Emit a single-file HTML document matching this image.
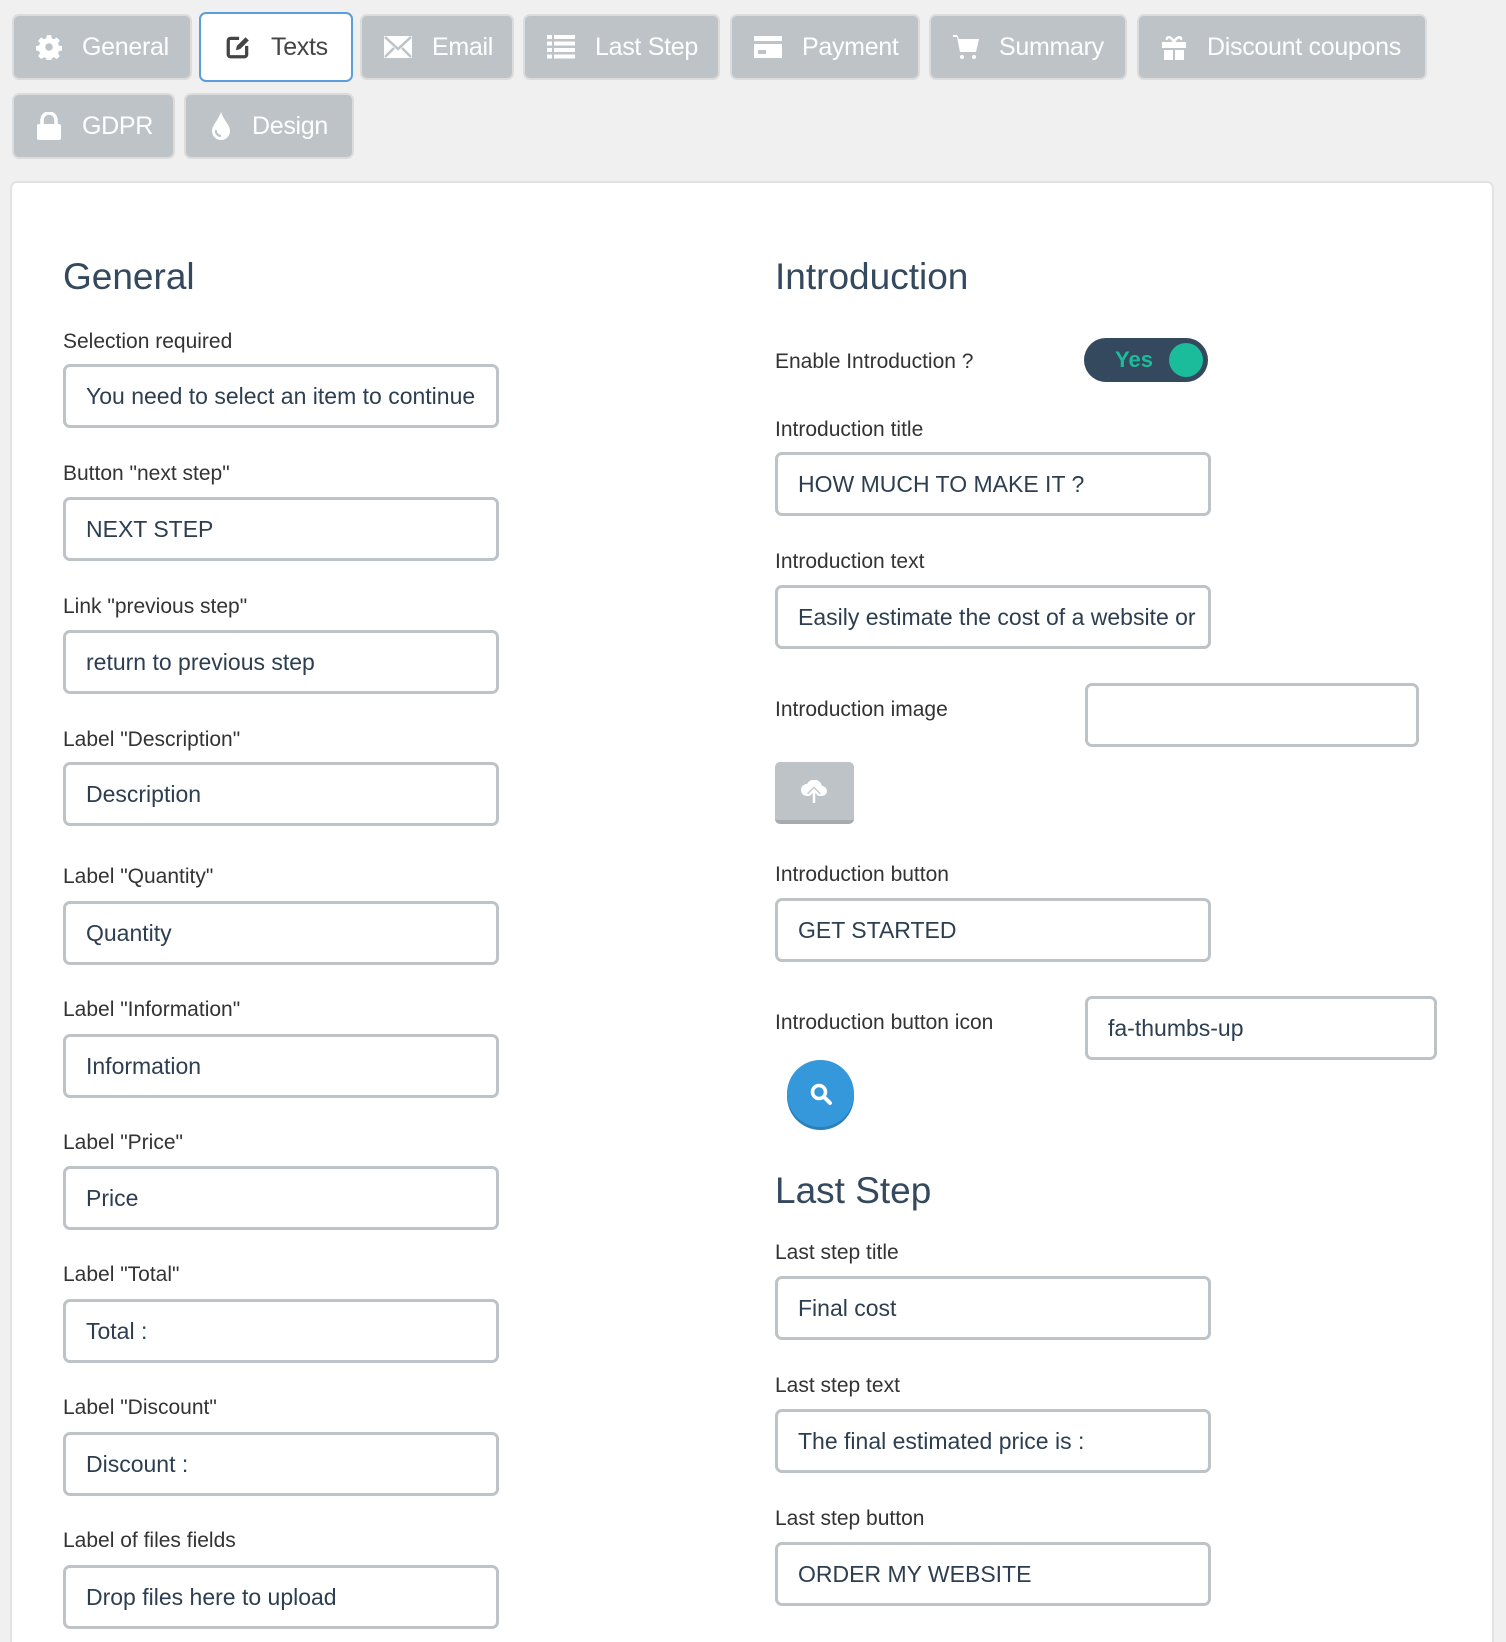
<!DOCTYPE html>
<html style="width:1506px;height:1642px;overflow:hidden"><head><meta charset="utf-8"><style>
*{box-sizing:border-box;margin:0;padding:0}
body{width:1506px;height:1642px;background:#f0f0f0;font-family:"Liberation Sans",Arial,sans-serif;position:relative;overflow:hidden}
.tab{position:absolute;background:#bdc3c7;border:2px solid #dcdcdc;border-radius:7px;color:#fff;font-size:25px;display:flex;align-items:center;letter-spacing:-0.3px}
.tab svg{margin-right:20px;flex:none}
.tab.act{background:#fff;border:2px solid #5a9ee0;color:#444}
.panel{position:absolute;left:10px;top:181px;width:1484px;height:1461px;background:#fff;border:2px solid #e2e2e2;border-bottom:none;border-radius:7px 7px 0 0}
.h{position:absolute;font-size:37px;color:#34495e}
.l{position:absolute;font-size:21px;color:#333;line-height:24px}
.i{position:absolute;height:64px;border:3px solid #bdc3c7;border-radius:7px;background:#fff;font-size:23px;color:#2c3e50;padding-left:20px;line-height:58px;white-space:nowrap;overflow:hidden}
.lc{left:63px;width:436px}
.rc{left:775px;width:436px}
</style></head><body>
<div class="tab" style="left:12px;top:14px;width:180px;height:66px;padding-left:22px"><svg width="26" height="26" viewBox="0 0 24 24"><path fill="#fff" d="M10 1h4l.6 3 2 .9 2.6-1.7 2.8 2.8-1.7 2.6.9 2 3 .6v4l-3 .6-.9 2 1.7 2.6-2.8 2.8-2.6-1.7-2 .9-.6 3h-4l-.6-3-2-.9-2.6 1.7-2.8-2.8 1.7-2.6-.9-2-3-.6v-4l3-.6.9-2-1.7-2.6 2.8-2.8 2.6 1.7 2-.9z"/><circle cx="12" cy="12" r="3.5" fill="#bdc3c7"/></svg>General</div>
<div class="tab act" style="left:199px;top:12px;width:154px;height:70px;padding-left:24px"><svg width="26" height="26" viewBox="0 0 24 24"><path d="M13 4H5a2 2 0 0 0-2 2v13a2 2 0 0 0 2 2h13a2 2 0 0 0 2-2v-8" fill="none" stroke="#444" stroke-width="3"/><path d="M10 15l1-4 8-8 3 3-8 8z" fill="#444"/></svg>Texts</div>
<div class="tab" style="left:360px;top:14px;width:154px;height:66px;padding-left:22px"><svg width="28" height="22" viewBox="0 0 28 22"><path fill="#fff" d="M0 0h28v22H0z"/><path d="M1 1l13 12L27 1M1 21l9-9M27 21l-9-9" stroke="#bdc3c7" stroke-width="2.5" fill="none"/></svg>Email</div>
<div class="tab" style="left:523px;top:14px;width:197px;height:66px;padding-left:22px"><svg width="28" height="24" viewBox="0 0 28 24"><g fill="#fff"><rect x="0" y="0" width="5" height="4"/><rect x="7" y="0" width="21" height="4"/><rect x="0" y="6.5" width="5" height="4"/><rect x="7" y="6.5" width="21" height="4"/><rect x="0" y="13" width="5" height="4"/><rect x="7" y="13" width="21" height="4"/><rect x="0" y="19.5" width="5" height="4"/><rect x="7" y="19.5" width="21" height="4"/></g></svg>Last Step</div>
<div class="tab" style="left:730px;top:14px;width:190px;height:66px;padding-left:22px"><svg width="28" height="22" viewBox="0 0 28 22"><path fill="#fff" d="M0 0h28v5H0zM0 8h28v14H0z"/><rect x="4" y="14" width="8" height="4" fill="#bdc3c7"/></svg>Payment</div>
<div class="tab" style="left:929px;top:14px;width:198px;height:66px;padding-left:22px"><svg width="26" height="26" viewBox="0 0 26 26"><path fill="#fff" d="M0 1h4l2 4h20l-3 13H7L4 3H0z"/><circle cx="9" cy="23" r="2" fill="#fff"/><circle cx="21" cy="23" r="2" fill="#fff"/></svg>Summary</div>
<div class="tab" style="left:1137px;top:14px;width:290px;height:66px;padding-left:22px"><svg width="26" height="26" viewBox="0 0 26 26"><path fill="#fff" d="M1 8h24v6H1zM3 16h9v10H3zM14 16h9v10h-9z"/><path d="M13 8C10 2 5 2 6 6M13 8c3-6 8-6 7-2" stroke="#fff" stroke-width="2.5" fill="none"/></svg>Discount coupons</div>
<div class="tab" style="left:12px;top:93px;width:163px;height:66px;padding-left:22px"><svg width="26" height="28" viewBox="0 0 26 28"><path d="M6 12V8a7 7 0 0 1 14 0v4" stroke="#fff" stroke-width="3.5" fill="none"/><rect x="1" y="12" width="24" height="16" rx="2" fill="#fff"/></svg>GDPR</div>
<div class="tab" style="left:184px;top:93px;width:170px;height:66px;padding-left:24px"><svg width="22" height="28" viewBox="0 0 22 28"><path fill="#fff" d="M11 0C8 9 2 13 2 19a9 9 0 0 0 18 0C20 13 14 9 11 0z"/><path d="M6 18a5 5 0 0 0 5 6" stroke="#bdc3c7" stroke-width="2" fill="none"/></svg>Design</div>

<div class="panel"></div>

<div class="h" style="left:63px;top:256px">General</div>
<div class="l" style="left:63px;top:330px">Selection required</div>
<div class="i lc" style="top:364px">You need to select an item to continue</div>
<div class="l" style="left:63px;top:462px">Button "next step"</div>
<div class="i lc" style="top:497px">NEXT STEP</div>
<div class="l" style="left:63px;top:595px">Link "previous step"</div>
<div class="i lc" style="top:630px">return to previous step</div>
<div class="l" style="left:63px;top:728px">Label "Description"</div>
<div class="i lc" style="top:762px">Description</div>
<div class="l" style="left:63px;top:865px">Label "Quantity"</div>
<div class="i lc" style="top:901px">Quantity</div>
<div class="l" style="left:63px;top:998px">Label "Information"</div>
<div class="i lc" style="top:1034px">Information</div>
<div class="l" style="left:63px;top:1131px">Label "Price"</div>
<div class="i lc" style="top:1166px">Price</div>
<div class="l" style="left:63px;top:1263px">Label "Total"</div>
<div class="i lc" style="top:1299px">Total :</div>
<div class="l" style="left:63px;top:1396px">Label "Discount"</div>
<div class="i lc" style="top:1432px">Discount :</div>
<div class="l" style="left:63px;top:1529px">Label of files fields</div>
<div class="i lc" style="top:1565px">Drop files here to upload</div>

<div class="h" style="left:775px;top:256px">Introduction</div>
<div class="l" style="left:775px;top:350px">Enable Introduction ?</div>
<div style="position:absolute;left:1084px;top:338px;width:124px;height:44px;border-radius:22px;background:#34495e"><span style="position:absolute;left:31px;top:9px;font-size:22px;font-weight:bold;color:#1abc9c">Yes</span><span style="position:absolute;right:5px;top:5px;width:34px;height:34px;border-radius:50%;background:#1abc9c"></span></div>
<div class="l" style="left:775px;top:418px">Introduction title</div>
<div class="i rc" style="top:452px">HOW MUCH TO MAKE IT ?</div>
<div class="l" style="left:775px;top:550px">Introduction text</div>
<div class="i rc" style="top:585px">Easily estimate the cost of a website or</div>
<div class="l" style="left:775px;top:698px">Introduction image</div>
<div class="i" style="left:1085px;top:683px;width:334px"></div>
<div style="position:absolute;left:775px;top:762px;width:79px;height:62px;background:#bdc3c7;border-radius:5px;border-bottom:4px solid #a5abaf"><svg style="position:absolute;left:25px;top:18px" width="28" height="24" viewBox="0 0 28 24"><path fill="#fff" d="M7 16a6 6 0 0 1 0-12 8 8 0 0 1 15 2 5 5 0 0 1 0 10z"/><path d="M14 23V11M9 15l5-5 5 5" stroke="#bdc3c7" stroke-width="5" fill="none"/><path d="M14 23V11M9 15l5-5 5 5" stroke="#fff" stroke-width="2.5" fill="none"/></svg></div>
<div class="l" style="left:775px;top:863px">Introduction button</div>
<div class="i rc" style="top:898px">GET STARTED</div>
<div class="l" style="left:775px;top:1011px">Introduction button icon</div>
<div class="i" style="left:1085px;top:996px;width:352px">fa-thumbs-up</div>
<div style="position:absolute;left:787px;top:1060px;width:67px;height:67px;border-radius:50%;background:#3498db;box-shadow:0 3px 0 #2a80b9"><svg style="position:absolute;left:22px;top:22px" width="24" height="24" viewBox="0 0 24 24"><circle cx="10" cy="10" r="6.5" stroke="#fff" stroke-width="3.5" fill="none"/><path d="M15 15l6 6" stroke="#fff" stroke-width="4" stroke-linecap="round"/></svg></div>
<div class="h" style="left:775px;top:1170px">Last Step</div>
<div class="l" style="left:775px;top:1241px">Last step title</div>
<div class="i rc" style="top:1276px">Final cost</div>
<div class="l" style="left:775px;top:1374px">Last step text</div>
<div class="i rc" style="top:1409px">The final estimated price is :</div>
<div class="l" style="left:775px;top:1507px">Last step button</div>
<div class="i rc" style="top:1542px">ORDER MY WEBSITE</div>
</body></html>
